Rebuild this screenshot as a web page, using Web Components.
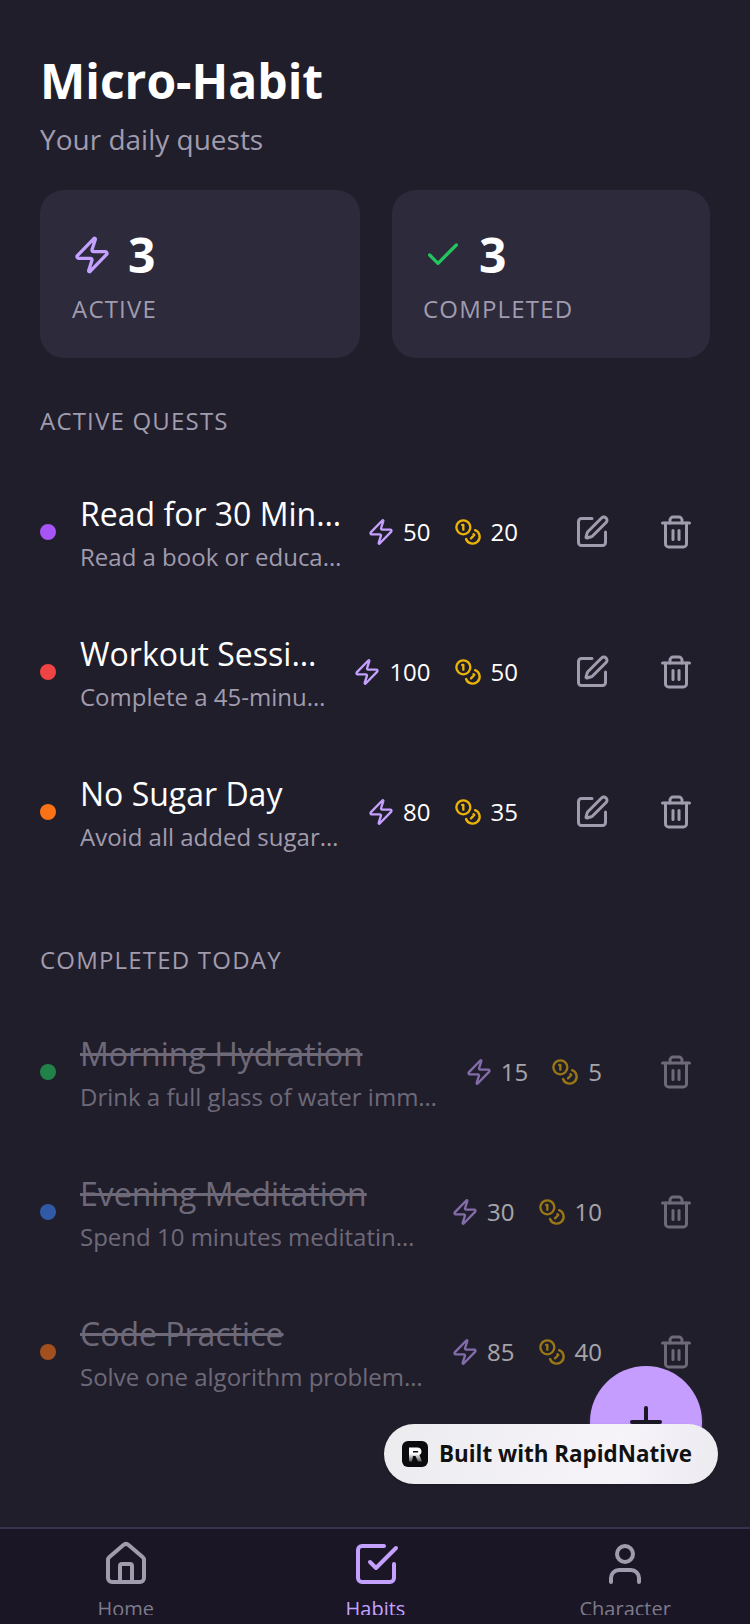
<!DOCTYPE html>
<html lang="en">
<head>
<meta charset="utf-8">
<title>Micro-Habit</title>
<style>
  html, body { margin: 0; padding: 0; background: #211e2b; }
  body { font-family: "Open Sans", "Noto Sans", sans-serif; }
</style>
</head>
<body>
<mh-app>
  <mh-header title="Micro-Habit" subtitle="Your daily quests"></mh-header>
  <mh-stats>
    <mh-stat-card icon="zap" tint="#c4a1ff" value="3" label="ACTIVE"></mh-stat-card>
    <mh-stat-card icon="check" tint="#22c55e" value="3" label="COMPLETED"></mh-stat-card>
  </mh-stats>

  <mh-section heading="ACTIVE QUESTS">
    <mh-quest dot="#a855f7" name="Read for 30 Minutes" note="Read a book or educational content" energy="50" coins="20"></mh-quest>
    <mh-quest dot="#ef4444" name="Workout Session" note="Complete a 45-minute workout" energy="100" coins="50"></mh-quest>
    <mh-quest dot="#f97316" name="No Sugar Day" note="Avoid all added sugars today" energy="80" coins="35"></mh-quest>
  </mh-section>

  <mh-section heading="COMPLETED TODAY" class="second">
    <mh-quest done dot="#22c55e" name="Morning Hydration" note="Drink a full glass of water immediately" energy="15" coins="5"></mh-quest>
    <mh-quest done dot="#3b82f6" name="Evening Meditation" note="Spend 10 minutes meditating daily" energy="30" coins="10"></mh-quest>
    <mh-quest done dot="#f97316" name="Code Practice" note="Solve one algorithm problem today" energy="85" coins="40"></mh-quest>
  </mh-section>

  <mh-fab slot="over"></mh-fab>
  <mh-badge slot="over">Built with RapidNative</mh-badge>

  <mh-tabbar slot="tabs">
    <mh-tab icon="house">Home</mh-tab>
    <mh-tab icon="check-box" active>Habits</mh-tab>
    <mh-tab icon="user">Character</mh-tab>
  </mh-tabbar>
</mh-app>

<script>
const ICONS = {
  zap: '<path d="M4 14a1 1 0 0 1-.78-1.63l9.9-10.2a.5.5 0 0 1 .86.46l-1.92 6.02A1 1 0 0 0 13 10h7a1 1 0 0 1 .78 1.63l-9.9 10.2a.5.5 0 0 1-.86-.46l1.92-6.02A1 1 0 0 0 11 14z"/>',
  check: '<path d="M20 6 9 17l-5-5"/>',
  coins: '<circle cx="8" cy="8" r="6"/><path d="M18.09 10.37A6 6 0 1 1 10.34 18"/><path d="M7 6h1v4"/><path d="m16.71 13.88.7.71-2.82 2.82"/>',
  edit: '<path d="M12 3H5a2 2 0 0 0-2 2v14a2 2 0 0 0 2 2h14a2 2 0 0 0 2-2v-7"/><path d="M18.375 2.625a1 1 0 0 1 3 3l-9.013 9.014a2 2 0 0 1-.853.505l-2.873.84a.5.5 0 0 1-.62-.62l.84-2.873a2 2 0 0 1 .506-.852z"/>',
  trash: '<path d="M3 6h18"/><path d="M19 6v14c0 1-1 2-2 2H7c-1 0-2-1-2-2V6"/><path d="M8 6V4c0-1 1-2 2-2h4c1 0 2 1 2 2v2"/><line x1="10" x2="10" y1="11" y2="17"/><line x1="14" x2="14" y1="11" y2="17"/>',
  plus: '<path d="M5 12h14"/><path d="M12 5v14"/>',
  house: '<path d="M15 21v-8a1 1 0 0 0-1-1h-4a1 1 0 0 0-1 1v8"/><path d="M3 10a2 2 0 0 1 .709-1.528l7-5.999a2 2 0 0 1 2.582 0l7 5.999A2 2 0 0 1 21 10v9a2 2 0 0 1-2 2H5a2 2 0 0 1-2-2z"/>',
  'check-box': '<path d="m9 11 3 3L22 4"/><path d="M21 12v7a2 2 0 0 1-2 2H5a2 2 0 0 1-2-2V5a2 2 0 0 1 2-2h11"/>',
  user: '<path d="M19 21v-2a4 4 0 0 0-4-4H9a4 4 0 0 0-4 4v2"/><circle cx="12" cy="7" r="4"/>'
};

function icon(name, size, color) {
  return `<svg xmlns="http://www.w3.org/2000/svg" width="${size}" height="${size}" viewBox="0 0 24 24" fill="none" stroke="${color}" stroke-width="2" stroke-linecap="round" stroke-linejoin="round" style="display:block;flex:none">${ICONS[name]}</svg>`;
}

class Base extends HTMLElement {
  connectedCallback() {
    if (this.shadowRoot) return;
    this.attachShadow({ mode: "open" });
    this.shadowRoot.innerHTML = this.markup;
  }
  attr(n) { return this.getAttribute(n) || ""; }
}

class MhApp extends Base {
  get markup() { return `
    <style>
      :host { display: block; width: 750px; height: 1624px; position: relative; overflow: hidden; background: #211e2b; }
      .shell { display: flex; flex-direction: column; height: 100%; }
      main { flex: 1; min-height: 0; overflow: hidden; padding: 48px 40px 0; }
    </style>
    <div class="shell">
      <main><slot></slot></main>
      <slot name="tabs"></slot>
    </div>
    <slot name="over"></slot>`; }
}

class MhHeader extends Base {
  get markup() { return `
    <style>
      :host { display: block; }
      h1 { margin: 0; font: 700 48px/66px "Open Sans", sans-serif; color: #fff; }
      p { margin: 6px 0 0; font: 400 28px/38px "Open Sans", sans-serif; color: #a09cae; }
    </style>
    <h1>${this.attr("title")}</h1>
    <p>${this.attr("subtitle")}</p>`; }
}

class MhStats extends Base {
  get markup() { return `
    <style>
      :host { display: grid; grid-template-columns: 320fr 318fr; gap: 32px; margin-top: 32px; }
    </style>
    <slot></slot>`; }
}

class MhStatCard extends Base {
  get markup() { return `
    <style>
      :host { display: block; box-sizing: border-box; height: 168px; padding: 32px; background: #2d2a3c; border-radius: 24px; }
      :host(:last-child) { padding-left: 31px; }
      .top { display: flex; align-items: center; gap: 16px; height: 66px; }
      .num { font: 700 48px/66px "Open Sans", sans-serif; color: #fff; }
      .lbl { font: 400 24px/34px "Open Sans", sans-serif; letter-spacing: 1.2px; color: #a09cae; margin-top: 4px; }
    </style>
    <div class="top">${icon(this.attr("icon"), 40, this.attr("tint"))}<span class="num">${this.attr("value")}</span></div>
    <div class="lbl">${this.attr("label")}</div>`; }
}

class MhSection extends Base {
  get markup() { return `
    <style>
      :host { display: block; margin-top: 46px; }
      :host(.second) { margin-top: 61px; }
      h2 { margin: 0 0 24px; font: 400 24px/34px "Open Sans", sans-serif; letter-spacing: 1.2px; color: #a09cae; }
      :host(.second) h2 { margin-bottom: 25px; }
      .list { display: flex; flex-direction: column; }
    </style>
    <h2>${this.attr("heading")}</h2>
    <div class="list"><slot></slot></div>`; }
}

class MhQuest extends Base {
  get markup() {
    const done = this.hasAttribute("done");
    return `
    <style>
      :host { display: flex; align-items: center; height: 140px; padding-right: 6px; }
      :host([done]) { opacity: .6; }
      .dot { width: 16px; height: 16px; border-radius: 50%; flex: none; margin-right: 24px; background: ${this.attr("dot")}; }
      .text { flex: 1; min-width: 0; margin-top: 2px; }
      .name, .note { white-space: nowrap; overflow: hidden; text-overflow: ellipsis; }
      .name { font: 400 32px/44px "Open Sans", sans-serif; color: #fff; }
      :host([done]) .name { text-decoration: line-through; color: #a09cae; }
      .note { font: 400 24px/34px "Open Sans", sans-serif; color: #a09cae; margin-top: 4px; }
      .stats { display: flex; gap: 23px; margin: 0 46px 0 24px; flex: none; }
      .stat { display: flex; align-items: center; gap: 8px; font: 400 24px/34px "Open Sans", sans-serif; color: #fff; }
      .stat.coin { gap: 9px; }
      .actions { display: flex; gap: 28px; flex: none; }
      .btn { width: 56px; height: 56px; display: flex; align-items: center; justify-content: center; }
    </style>
    <span class="dot"></span>
    <div class="text">
      <div class="name">${this.attr("name")}</div>
      <div class="note">${this.attr("note")}</div>
    </div>
    <div class="stats">
      <div class="stat">${icon("zap", 28, "#c4a1ff")}<span>${this.attr("energy")}</span></div>
      <div class="stat coin">${icon("coins", 28, "#eab308")}<span>${this.attr("coins")}</span></div>
    </div>
    <div class="actions">
      ${done ? "" : `<div class="btn">${icon("edit", 36, "#a09cae")}</div>`}
      <div class="btn">${icon("trash", 36, "#a09cae")}</div>
    </div>`;
  }
}

class MhFab extends Base {
  get markup() { return `
    <style>
      :host { display: flex; align-items: center; justify-content: center; position: absolute; left: 590px; top: 1366px; width: 112px; height: 112px; border-radius: 50%; background: #c49dff; box-shadow: 0 5px 4px -1px rgba(150,100,230,.6); }
    </style>
    ${icon("plus", 48, "#1a1625")}`; }
}

class MhBadge extends Base {
  get markup() { return `
    <style>
      :host { display: flex; align-items: center; gap: 11px; box-sizing: border-box; position: absolute; left: 384px; top: 1424px; width: 334px; height: 60px; padding: 0 18px; border-radius: 30px; background: linear-gradient(100deg, #ececef, #f6f3f9 70%, #ecebf0); box-shadow: 0 1px 2px rgba(0,0,0,.25); font: 700 22.4px/30px "Open Sans", sans-serif; color: #111; white-space: nowrap; }
      .logo { width: 26px; height: 26px; border-radius: 6px; background: #0c0c0e; display: flex; align-items: center; justify-content: center; flex: none; }
    </style>
    <span class="logo"><svg width="15" height="15" viewBox="0 0 15 15"><defs><linearGradient id="fade" x1="0" y1="0" x2="0" y2="1"><stop offset=".45" stop-color="#fff"/><stop offset="1" stop-color="#555"/></linearGradient></defs><path fill="url(#fade)" d="M1 .5h8.5a4 4 0 0 1 1.9 7.5l2.6 6.5h-4L7.5 9H5l-1 5.5H1z"/><path fill="#0c0c0e" d="M5 4h4.5a.8.8 0 0 1 0 1.6H5z"/></svg></span>
    <slot></slot>`; }
}

class MhTabbar extends Base {
  get markup() { return `
    <style>
      :host { display: block; flex: none; box-sizing: border-box; height: 97px; background: #1a1625; border-top: 2px solid #39314f; padding-bottom: 9px; }
      .row { display: flex; height: 100%; overflow: hidden; padding-left: 1px; }
      ::slotted(*) { flex: 1; }
    </style>
    <div class="row"><slot></slot></div>`; }
}

class MhTab extends Base {
  get markup() {
    const on = this.hasAttribute("active");
    return `
    <style>
      :host { display: flex; flex-direction: column; align-items: center; padding-top: 11px; font: 400 20px/28px "Open Sans", sans-serif; color: ${on ? "#c4a1ff" : "#7d7a8a"}; }
      span { margin-top: 7px; }
    </style>
    ${icon(this.attr("icon"), 48, on ? "#c4a1ff" : "#a09cae")}
    <span><slot></slot></span>`;
  }
}

customElements.define("mh-app", MhApp);
customElements.define("mh-header", MhHeader);
customElements.define("mh-stats", MhStats);
customElements.define("mh-stat-card", MhStatCard);
customElements.define("mh-section", MhSection);
customElements.define("mh-quest", MhQuest);
customElements.define("mh-fab", MhFab);
customElements.define("mh-badge", MhBadge);
customElements.define("mh-tabbar", MhTabbar);
customElements.define("mh-tab", MhTab);
</script>
</body>
</html>
